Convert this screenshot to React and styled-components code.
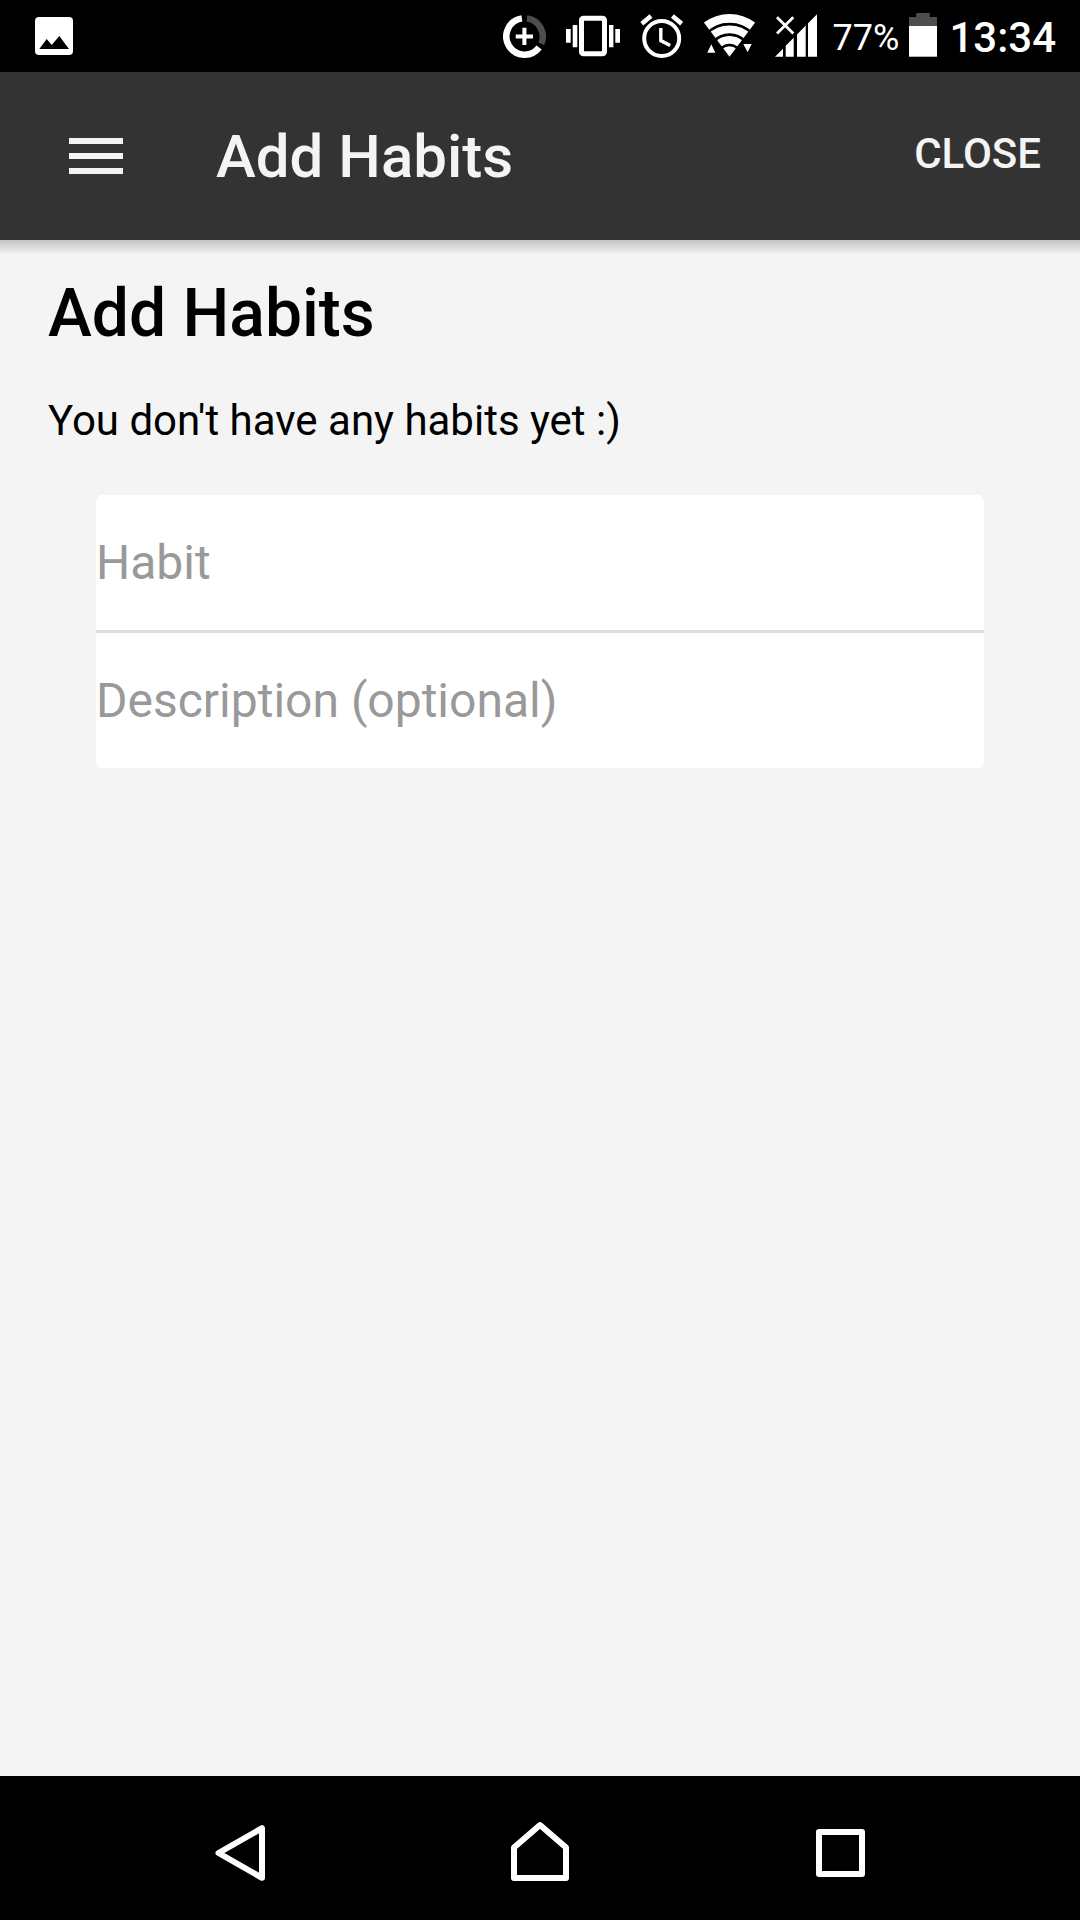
import React, { useState } from 'react'
import styled, { createGlobalStyle } from 'styled-components'

// Styles
const colors = {
    dark: '#333333',
    light: '#f4f4f4',
    line: '#dddddd',
    hint: '#999999',
    dim: '#4d4d4d'
}

const GlobalStyle = createGlobalStyle`
    * { box-sizing: border-box; }
    body {
        margin: 0;
        background: ${colors.light};
        font-family: Roboto, 'Noto Sans', sans-serif;
        font-size: 42px;
    }
    svg { display: block; flex: none; }
`

const Screen = styled.div`
    display: flex;
    flex-direction: column;
    min-height: 100vh;
`

const StatusBar = styled.div`
    display: flex;
    align-items: center;
    justify-content: space-between;
    height: 72px;
    padding: 4px 24px 0 35px;
    background: #000;
    color: #fff;
`

const StatusGroup = styled.div`
    display: flex;
    align-items: center;
    gap: ${({ gap }) => gap}px;
`

const Battery = styled.span`
    margin-left: 6px;
    font-size: 36px;
`

const Clock = styled.time`
    margin-left: 2px;
    padding-bottom: 2px;
    font-weight: 500;
`

const Header = styled.header`
    display: flex;
    align-items: center;
    height: 168px;
    padding: 0 39px 0 48px;
    background: ${colors.dark};
    color: ${colors.light};
`

const BarButton = styled.button`
    padding: 0;
    border: 0;
    background: none;
    color: inherit;
    font: inherit;
    cursor: pointer;
`

const MenuButton = styled(BarButton)`
    display: flex;
    align-items: center;
    justify-content: center;
    width: 96px;
    height: 96px;
`

const CloseButton = styled(BarButton)`
    height: 96px;
    padding-bottom: 6px;
    font-weight: 500;
    text-transform: uppercase;
`

const HeaderTitle = styled.div`
    flex: 1;
    margin-left: 72px;
    font-size: 60px;
    font-weight: 500;
`

const Content = styled.main`
    flex: 1;
    padding: 35px 48px;
    background: linear-gradient(#c4c4c4, ${colors.light} 15px);
`

const Title = styled.h1`
    margin: 0 0 43px;
    font-size: 66px;
    font-weight: 500;
    line-height: 78px;
`

const Message = styled.p`
    margin: 0 0 49px;
    line-height: 50px;
`

const Form = styled.form`
    margin: 0 48px;
    border-radius: 6px;
    background: #fff;
    overflow: hidden;
`

const Field = styled.input`
    display: block;
    width: 100%;
    height: 135px;
    padding: 0;
    border: 0;
    outline: 0;
    background: none;
    font: inherit;
    font-size: 48px;

    &::placeholder {
        color: ${colors.hint};
        opacity: 1;
    }
    & + & {
        height: 138px;
        border-top: 3px solid ${colors.line};
    }
`

const NavBar = styled.nav`
    display: flex;
    height: 144px;
    padding: 0 8.33%;
    background: #000;
`

const NavButton = styled(BarButton)`
    display: flex;
    flex: 1;
    align-items: center;
    justify-content: center;
`

// Icons
const ImageIcon = () => (
    <svg width="38" height="50" viewBox="0 0 38 50">
        <rect y="4" width="38" height="38" rx="4" fill="#fff" />
        <path d="M4.3 36 11.7 26 16.7 32 24.3 23 34 36Z" fill="#000" />
    </svg>
)

const DataSaverIcon = () => (
    <svg width="43" height="50" viewBox="0 0 43 50" fill="none" stroke="#fff">
        <path d="M24 5.4A18.25 18.25 0 0 1 38.2 30.9" stroke={colors.dim} strokeWidth="6.5" />
        <path d="M36.1 34.5A18.25 18.25 0 1 1 18.9 5.4" strokeWidth="6.5" />
        <path d="M21.4 14.7V32M12.7 23.4H30" strokeWidth="4" />
    </svg>
)

const VibrateIcon = () => (
    <svg width="54" height="50" viewBox="0 0 54 50" fill="#fff">
        <rect x="15.5" y="5.2" width="23" height="35.6" rx="2" fill="none" stroke="#fff" strokeWidth="5" />
        <path d="M6.7 12h4.6v22.3H6.7zM0 16h4.7v13.7H0zM43 12h4.4v22.3H43zM49.3 16H54v13.7h-4.7z" />
    </svg>
)

const AlarmIcon = () => (
    <svg width="43" height="50" viewBox="0 0 43 50" fill="none" stroke="#fff">
        <circle cx="21.7" cy="25.5" r="17.5" strokeWidth="4" />
        <path d="M20.8 15V27.6L30.2 32.5" strokeWidth="3.4" />
        <path d="M1.8 10.7 11 3.1M41.6 10.7 32.4 3.1" strokeWidth="4.6" />
    </svg>
)

const WifiIcon = () => (
    <svg width="52" height="50" viewBox="0 0 52 50">
        <path d="M26.5 43.7 .9 9.6A42.7 42.7 0 0 1 52.1 9.6Z" fill="#fff" />
        <g fill="none" stroke="#000" strokeWidth="2.6">
            <path d="M3.5 20.7A32.5 32.5 0 0 1 49.5 20.7" />
            <path d="M10.9 28.1A22 22 0 0 1 42.1 28.1" strokeLinecap="square" />
            <path d="M18.2 35.4A11.7 11.7 0 0 1 34.8 35.4" strokeLinecap="square" />
        </g>
        <path d="M4.3 39.7 8.3 31.3 12.3 39.7ZM40.3 31H48.7L44.6 39.3Z" fill="#fff" />
    </svg>
)

const SignalIcon = () => (
    <svg width="42" height="50" viewBox="0 0 42 50">
        <path d="M0 43.7 8 35.7V43.7ZM10.7 43.7V32.8L18.7 24.7V43.7ZM22 43.7V21.4L30.7 12.6V43.7ZM33 43.7V10.3L42 1.3V43.7Z" fill="#fff" />
        <path d="M2 4.3 18.3 20.6M18.3 4.3 2 20.6" stroke="#fff" strokeWidth="2.8" />
    </svg>
)

const BatteryIcon = () => (
    <svg width="28" height="50" viewBox="0 0 28 50">
        <path d="M7.3 0H20.7V4H28V13H0V4H7.3Z" fill={colors.dim} />
        <path d="M0 13H28V43.7H0Z" fill="#fff" />
    </svg>
)

const MenuIcon = () => (
    <svg width="54" height="36" viewBox="0 0 54 36" fill="currentColor">
        <path d="M0 0H54V6H0zM0 15H54V21H0zM0 30H54V36H0z" />
    </svg>
)

const NavIcon = ({ d }) => (
    <svg width="72" height="72" viewBox="0 0 72 72" fill="none" stroke="#fff" strokeWidth="6" strokeLinejoin="round">
        <path d={d} />
    </svg>
)

// Data
const navItems = [
    { label: 'Back', d: 'M14.5 41 58 16.2V65.8Z' },
    { label: 'Home', d: 'M10 35.5 36 13 62 35.5V66H10Z' },
    { label: 'Recent apps', d: 'M15 20H58V62H15Z' }
]


const App = () => {
    const [habit, setHabit] = useState('')
    const [description, setDescription] = useState('')

    return (
        <Screen>
            <GlobalStyle />

            <StatusBar>
                <ImageIcon />
                <StatusGroup gap={10}>
                    <StatusGroup gap={20}>
                        <DataSaverIcon />
                        <VibrateIcon />
                        <AlarmIcon />
                        <WifiIcon />
                        <SignalIcon />
                    </StatusGroup>
                    <Battery>77%</Battery>
                    <BatteryIcon />
                    <Clock>13:34</Clock>
                </StatusGroup>
            </StatusBar>

            <Header>
                <MenuButton type="button" aria-label="Menu"><MenuIcon /></MenuButton>
                <HeaderTitle>Add Habits</HeaderTitle>
                <CloseButton type="button">Close</CloseButton>
            </Header>

            <Content>
                <Title>Add Habits</Title>
                <Message>You don't have any habits yet :)</Message>
                <Form>
                    <Field
                        aria-label="Habit"
                        placeholder="Habit"
                        value={habit}
                        onChange={e => setHabit(e.target.value)}
                    />
                    <Field
                        aria-label="Description (optional)"
                        placeholder="Description (optional)"
                        value={description}
                        onChange={e => setDescription(e.target.value)}
                    />
                </Form>
            </Content>

            <NavBar>
                {navItems.map(item => (
                    <NavButton key={item.label} type="button" aria-label={item.label}>
                        <NavIcon d={item.d} />
                    </NavButton>
                ))}
            </NavBar>
        </Screen>
    )
}


export default App
